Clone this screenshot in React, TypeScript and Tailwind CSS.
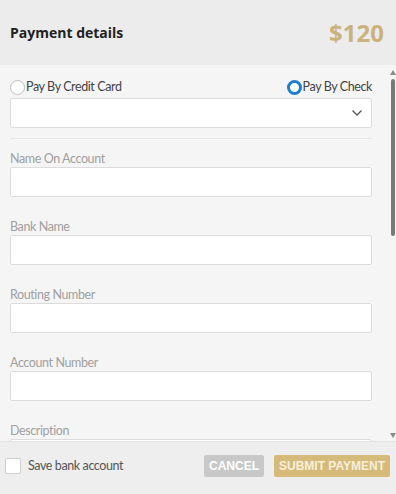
import React from "react";

const fields = ["Name On Account", "Bank Name", "Routing Number", "Account Number", "Description"];

const Field = ({ label }: { label: string }) => {
  return (
    <div className="mt-[22px] first:mt-0">
      <div className="h-[15px] text-[12.5px] leading-[15px] tracking-[-0.4px] text-[#a0a0a0]">{label}</div>
      <div className="mt-px h-[30px] rounded-[2px] border border-[#dcdcdc] bg-white" />
    </div>
  );
};

const App = () => {
  return (
    <div className="flex h-[494px] w-[396px] flex-col overflow-hidden bg-[#f5f5f5] font-['Lato',sans-serif]">
      <div className="flex h-[65px] shrink-0 items-center justify-between bg-[#ececec] pl-[10px] pr-[12px]">
        <h2 className="font-['Open_Sans',sans-serif] text-[14px] font-bold text-[#222]">Payment details</h2>
        <div className="font-['Open_Sans',sans-serif] text-[24px] font-bold text-[#cbb27c]">$120</div>
      </div>

      <div className="flex min-h-0 flex-1">
        <div className="min-w-0 flex-1 overflow-hidden pl-[10px] pr-[18px] pt-[12px]">
          <div className="flex h-[20px] items-center justify-between">
            <label className="flex items-center text-[12.5px] tracking-[-0.4px] text-[#444]">
              <span className="h-[15px] w-[15px] rounded-full border border-[#bdbdbd] bg-white" />
              <span className="ml-px">Pay By Credit Card</span>
            </label>
            <label className="flex items-center text-[12.5px] tracking-[-0.4px] text-[#444]">
              <span className="h-[15px] w-[15px] rounded-full border-[3px] border-[#1c7fd1] bg-white" />
              <span className="ml-px">Pay By Check</span>
            </label>
          </div>

          <div className="mt-[1px] flex h-[30px] items-center justify-end rounded-[2px] border border-[#dcdcdc] bg-white pr-[8px]">
            <svg width="12" height="8" viewBox="0 0 12 8" fill="none">
              <path d="M1.5 1.5 6 6l4.5-4.5" stroke="#555" strokeWidth="1.3" />
            </svg>
          </div>

          <div className="mt-[10px] h-px bg-[#e6e6e6]" />

          <div className="mt-[12px]">
            {fields.map((f) => (
              <Field key={f} label={f} />
            ))}
          </div>
        </div>

        <div className="flex w-[6px] shrink-0 flex-col items-center bg-[#f5f5f5] pt-[5px] pb-[3px]">
          <svg width="6" height="5" viewBox="0 0 6 5">
            <path d="M3 0 6 5H0z" fill="#8a8a8a" />
          </svg>
          <div className="mt-[4px] h-[157px] w-[4px] rounded-full bg-[#7a7a7a]" />
          <div className="flex-1" />
          <svg width="6" height="5" viewBox="0 0 6 5">
            <path d="M0 0h6L3 5z" fill="#8a8a8a" />
          </svg>
        </div>
      </div>

      <div className="flex h-[53px] shrink-0 items-center justify-between border-t border-[#e2e2e2] bg-[#eeeeee] pb-[4px] pl-[5px] pr-[6px]">
        <label className="flex items-center text-[12.5px] tracking-[-0.4px] text-[#555]">
          <span className="h-[16px] w-[16px] rounded-[2px] border border-[#cfcfcf] bg-white" />
          <span className="ml-[7px]">Save bank account</span>
        </label>
        <div className="flex items-center gap-[10px] font-['Liberation_Sans',sans-serif] text-[12px] font-bold">
          <button className="h-[22px] rounded-[2px] bg-[#c8c8c8] px-[5px] text-white">CANCEL</button>
          <button className="h-[22px] rounded-[2px] bg-[#d5ba7a] px-[5px] text-[#f8f0dc]">SUBMIT PAYMENT</button>
        </div>
      </div>
    </div>
  );
};

export default App;
